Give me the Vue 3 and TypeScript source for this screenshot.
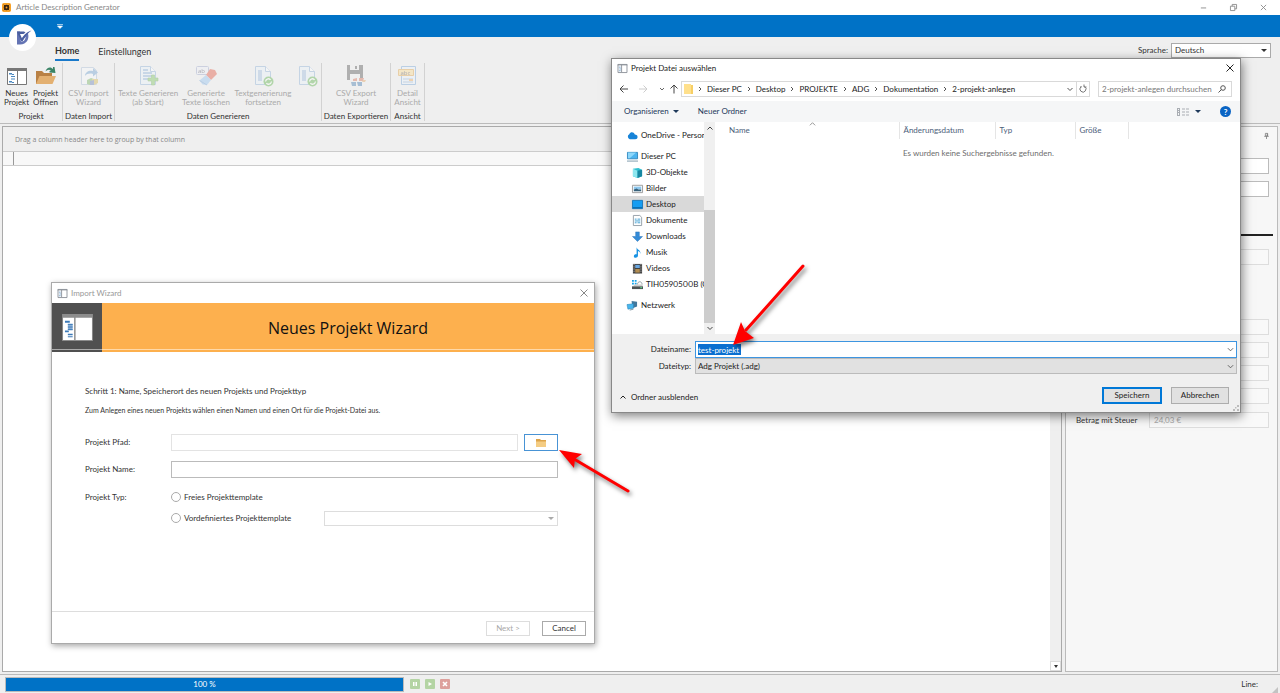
<script setup lang="ts">
import { ref } from 'vue'

interface RibbonItem { icon: string; lines: string[]; width: number; off?: boolean }
interface RibbonGroup { label: string; width: number; items: RibbonItem[] }
interface TreeItem { label: string; icon: string; root?: boolean; gap?: boolean; active?: boolean }

const groups: RibbonGroup[] = [
  {
    label: 'Projekt', width: 63, items: [
      { icon: 'new', lines: ['Neues', 'Projekt'], width: 29 },
      { icon: 'open', lines: ['Projekt', 'Öffnen'], width: 29 },
    ],
  },
  { label: 'Daten Import', width: 52, items: [{ icon: 'import', lines: ['CSV Import', 'Wizard'], width: 50, off: true }] },
  {
    label: 'Daten Generieren', width: 207, items: [
      { icon: 'add', lines: ['Texte Generieren', '(ab Start)'], width: 64, off: true },
      { icon: 'erase', lines: ['Generierte', 'Texte löschen'], width: 52, off: true },
      { icon: 'refresh', lines: ['Textgenerierung', 'fortsetzen'], width: 62, off: true },
      { icon: 'refresh', lines: [], width: 26, off: true },
    ],
  },
  { label: 'Daten Exportieren', width: 69, items: [{ icon: 'export', lines: ['CSV Export', 'Wizard'], width: 60, off: true }] },
  { label: 'Ansicht', width: 34, items: [{ icon: 'detail', lines: ['Detail', 'Ansicht'], width: 33, off: true }] },
]

const tree: TreeItem[] = [
  { label: 'OneDrive - Person', icon: 'cloud', root: true },
  { label: 'Dieser PC', icon: 'pc', root: true, gap: true },
  { label: '3D-Objekte', icon: 'cube' },
  { label: 'Bilder', icon: 'image' },
  { label: 'Desktop', icon: 'desktop', active: true },
  { label: 'Dokumente', icon: 'doc' },
  { label: 'Downloads', icon: 'down' },
  { label: 'Musik', icon: 'music' },
  { label: 'Videos', icon: 'video' },
  { label: 'TIH0590500B (C:)', icon: 'drive' },
  { label: 'Netzwerk', icon: 'net', root: true, gap: true },
]

const crumbs = ['Dieser PC', 'Desktop', 'PROJEKTE', 'ADG', 'Dokumentation', '2-projekt-anlegen']
const fileName = ref('test-projekt')
const language = ref('Deutsch')
const amount = ref('24,03 €')
const projectType = ref('')
</script>

<template>
  <div class="app">
    <header class="titlebar">
      <svg class="appicon" viewBox="0 0 10 10"><rect width="10" height="10" rx="2" fill="#f7a128" /><circle cx="5" cy="5" r="3" fill="#3a2410" /><circle cx="5" cy="5" r="1" fill="#f7a128" /><path d="M2 2l1.500 1.500M8 2L6.500 3.500M2 8l1.500-1.500M8 8L6.500 6.500" stroke="#3a2410" /></svg>
      <span class="apptitle">Article Description Generator</span>
      <button class="winbtn" aria-label="Minimieren"><svg viewBox="0 0 8 8"><path d="M1 4.500h6" /></svg></button>
      <button class="winbtn" aria-label="Wiederherstellen"><svg viewBox="0 0 8 8"><path d="M.5 2.500h5v5h-5zM2.500 2.500v-2h5v5h-2" /></svg></button>
      <button class="winbtn" aria-label="Schließen"><svg viewBox="0 0 8 8"><path d="M1 1l6 6M7 1L1 7" /></svg></button>
    </header>
    <div class="quickbar">
      <div class="logo">
        <svg viewBox="0 0 27 27"><path d="M8 7.500h3l-.5 3 2 4.500c2-4 6-7.500 10-8.500-2 1-3 2-3.500 3 1.500 5-1 11-8 11H8z" fill="#6474b4" /><path d="M11 16l1.500 2c2.500-.5 4-2.500 4.300-5.500L13 17.500z" fill="#fff" /><path d="M8 7.500h7l1.500 1-2 1.500H11l2 4.500C15 11 18.500 8 22.500 6.500c-4 3-7 6.500-9.500 11.500L9 10.500z" fill="#4a5f9f" /></svg>
      </div>
      <svg class="quickcaret" viewBox="0 0 6 5"><path d="M0 .5h6M.5 2L3 4.500 5.500 2z" fill="#fff" stroke="#fff" stroke-width=".6" /></svg>
    </div>

    <section class="ribbon">
      <nav class="tabs">
        <button class="tab on">Home</button>
        <button class="tab">Einstellungen</button>
        <label class="lang">Sprache:
          <span class="combo"><select v-model="language"><option>Deutsch</option></select><i class="tri"></i></span>
        </label>
      </nav>
      <div class="groups">
        <div v-for="g in groups" :key="g.label" class="group" :style="{ width: g.width + 'px' }">
          <div class="items">
            <button v-for="(it, i) in g.items" :key="i" class="item" :disabled="it.off" :style="{ width: it.width + 'px' }" :aria-label="it.lines.length ? undefined : 'Aktualisieren'">
              <svg viewBox="0 0 22 22">
                <template v-if="it.icon === 'new'">
                  <path d="M1.500 3.500h19v16h-19z" fill="#fff" stroke="#777" /><path d="M1 3h20v3H1z" fill="#777" /><path d="M11.500 6v14" stroke="#777" />
                  <path d="M3 8h3v1.500H3zM5 11h4v1H5zM5 13.500h4v1H5zM3 16h3v1.500H3zM6 9h2v1H6zM6 17h2v1H6z" fill="#4a88c0" />
                </template>
                <template v-else-if="it.icon === 'open'">
                  <path d="M1 6h6l2 2h8v11H1z" fill="#b98145" /><path d="M4.500 11H21l-3.500 8H1z" fill="#e3b071" /><path d="M10.500 6.500c1-4 5-5.500 7.500-2.500V2h1.500l1 6-6-.5V6l1.500-.5c-2-1.500-4-.5-5.500 1z" fill="#3b8467" />
                </template>
                <template v-else-if="it.icon === 'import'">
                  <path d="M3.500 2.500h12l3 3v14h-15z" fill="#f8fafc" stroke="#a9bdd4" /><path d="M7 11c0-4 4-6 8-5V3l5 4.500-5 4V9c-3-1-6-.5-8 2z" fill="#6a9fd0" /><path d="M9 15l4-2 3 1v5l-4 1-3-1z" fill="#74b35d" /><path d="M14 14h6v4l-4 2-3-1z" fill="#d5b64f" /><path d="M12 16l4-1v5h-4z" fill="#667fb5" />
                </template>
                <template v-else-if="it.icon === 'add' || it.icon === 'refresh'">
                  <path d="M3.500 1.500h10l5 5v13h-15z" fill="#eaf2fb" stroke="#88acd6" /><path d="M13.500 1.500v5h5" fill="#fff" stroke="#88acd6" />
                  <path v-if="it.icon === 'refresh'" d="M6 5h4v11H6z" fill="#9dbce0" />
                  <path v-else d="M6 5h5M6 8h9M6 11h9M6 14h7" stroke="#72a0d4" stroke-width="1.500" />
                  <path v-if="it.icon === 'add'" d="M14.500 10h3v3h3.500v3h-3.500v4h-3v-4H11v-3h3.500z" fill="#7ac35c" stroke="#58a53c" stroke-width=".6" />
                  <g v-else><circle cx="16.500" cy="16.500" r="5" fill="#55af43" /><path d="M13.500 16.500c.5-3 4-3.500 5-1.500M19.500 16.500c-.5 3-4 3.500-5 1.500" fill="none" stroke="#fff" stroke-width="1.300" /></g>
                </template>
                <template v-else-if="it.icon === 'erase'">
                  <rect x="1.500" y="1.500" width="12" height="8" rx="1" fill="#eef0f8" stroke="#99a4c8" /><text x="3" y="8" class="ic">ab</text>
                  <path d="M15 4l5 1 2 4-6 6-5-5z" fill="#e1523a" /><path d="M11 10l5 5-4 5-4.500-.5-3-4z" fill="#8fc0f0" /><path d="M4.500 15.500l7.500 4.500" stroke="#6d9bd0" />
                </template>
                <template v-else-if="it.icon === 'export'">
                  <path d="M2 0h16v14h-3V9H5v6H2zM5 0v5h9V0z" fill="#505050" fill-rule="evenodd" /><path d="M10 1h2v3h-2z" fill="#505050" />
                  <path d="M8 14l4-1v3H8zM14 13h5l-1 3h-4z" fill="#d5694f" /><path d="M6 17h5v4H7z" fill="#3f78ad" /><path d="M12 17h5v4h-4z" fill="#3973ae" /><path d="M18 15h3l-1 2h-3z" fill="#e3a35a" />
                </template>
                <template v-else>
                  <path d="M4.500 1.500h14v18h-14z" fill="#e8f2fc" stroke="#70a0d4" /><path d="M6 14h10M6 17h10" stroke="#88aad0" /><path d="M12 14h4v2h-4z" fill="#f0a850" /><path d="M1.500 4.500h15v6h-15z" fill="#fbd98c" stroke="#e0a040" /><text x="3.500" y="9.500" class="ic">abc</text>
                </template>
              </svg>
              <span v-for="l in it.lines" :key="l">{{ l }}</span>
            </button>
          </div>
          <div class="glabel">{{ g.label }}</div>
        </div>
      </div>
    </section>

    <main class="content">
      <section class="grid">
        <div class="grouppanel">Drag a column header here to group by that column</div>
        <div class="gridhead"><i></i></div>
        <div class="gridbody"><div class="vscroll"><button aria-label="Nach unten"><i class="tri"></i></button></div></div>
      </section>
      <aside class="side">
        <div class="pinrow"><svg viewBox="0 0 6 8"><path d="M1.500.5h3v3.500h-3zM0 4.500h6M3 4.500V8M4 .5V4" fill="none" stroke="#777" /></svg></div>
        <input class="field solid" aria-label="Feld 1"><input class="field solid" aria-label="Feld 2">
        <hr>
        <input class="field lone" disabled aria-label="Feld 3">
        <input v-for="n in 4" :key="n" class="field" disabled :aria-label="'Feld ' + (n + 3)">
        <label class="amount"><span>Betrag mit Steuer</span><input v-model="amount" class="field" disabled></label>
      </aside>
    </main>

    <footer class="status">
      <div class="progress" role="progressbar" aria-valuenow="100">100 %</div>
      <button class="mini green" aria-label="Pause"><svg viewBox="0 0 10 10"><path d="M3 3h1.500v4H3zM5.500 3H7v4H5.500z" fill="#fff" /></svg></button>
      <button class="mini green" aria-label="Start"><svg viewBox="0 0 10 10"><path d="M3.500 3L7 5 3.500 7z" fill="#fff" /></svg></button>
      <button class="mini red" aria-label="Stopp"><svg viewBox="0 0 10 10"><path d="M3 3l4 4M7 3L3 7" stroke="#fff" stroke-width="1.600" /></svg></button>
      <span class="line">Line:</span>
      <svg class="grip" viewBox="0 0 6 6"><path d="M6 0v6H0z" fill="#c3c3c3" /></svg>
    </footer>

    <section class="wizard" role="dialog" aria-label="Import Wizard">
      <div class="wtitle">
        <svg class="wicon" viewBox="0 0 11 10"><path d="M.5.500h10v9H.5zM4.500 1v8" fill="#fff" stroke="#8a9097" /><path d="M0 1h11" stroke="#8a9097" /><path d="M1.500 3.500h2M2 5.500h2M1.500 7.500h2" stroke="#7aa5cc" /></svg>
        <span>Import Wizard</span>
        <button aria-label="Schließen"><svg viewBox="0 0 8 8"><path d="M.5.500l7 7M7.500.500l-7 7" /></svg></button>
      </div>
      <div class="banner">
        <div class="bicon">
          <svg viewBox="0 0 32 28"><path d="M0 0h32v28H0z" fill="#8c8c8c" /><path d="M1 4h11.500v23H1zM14 4h17v23H14z" fill="#fff" /><path d="M3 7h5v2H3zM3 17h4v2H3zM6 20.500h5V22H6zM6 23h5v1H6z" fill="#3c7ab8" /><path d="M6 10h5v7H6z" fill="#8db2d8" /><path d="M6 11h5M6 13.500h5M6 16h5" stroke="#3c7ab8" /></svg>
        </div>
        <h1>Neues Projekt Wizard</h1>
      </div>
      <form class="wbody" @submit.prevent>
        <p class="step">Schritt 1: Name, Speicherort des neuen Projekts und Projekttyp</p>
        <p class="hint">Zum Anlegen eines neuen Projekts wählen einen Namen und einen Ort für die Projekt-Datei aus.</p>
        <div class="frow"><label for="pfad">Projekt Pfad:</label><input id="pfad" class="light"><button class="browse" type="button" aria-label="Durchsuchen"><svg viewBox="0 0 10 8"><path d="M0 0h4l1 1h5v7H0z" fill="#dda44a" /><path d="M0 2.500h10V8H0z" fill="#f4cc83" /></svg></button></div>
        <div class="frow"><label for="pname">Projekt Name:</label><input id="pname"></div>
        <div class="types">
          <span>Projekt Typ:</span>
          <label class="radio"><input v-model="projectType" type="radio" name="typ" value="frei">Freies Projekttemplate</label>
          <label class="radio second"><input v-model="projectType" type="radio" name="typ" value="vordefiniert">Vordefiniertes Projekttemplate</label>
          <span class="combo tpl"><select disabled aria-label="Projekttemplate"></select><i class="tri"></i></span>
        </div>
      </form>
      <div class="wfoot"><button disabled>Next &gt;</button><button>Cancel</button></div>
    </section>

    <section class="dialog" role="dialog" aria-label="Projekt Datei auswählen">
      <div class="dtitle">
        <svg class="wicon" viewBox="0 0 11 10"><path d="M.5.500h10v9H.5zM4.500 1v8" fill="#fff" stroke="#8a9097" /><path d="M0 1h11" stroke="#8a9097" /><path d="M1.500 3.500h2M2 5.500h2M1.500 7.500h2" stroke="#7aa5cc" /></svg>
        <span>Projekt Datei auswählen</span>
        <button aria-label="Schließen"><svg viewBox="0 0 8 8"><path d="M.5.500l7 7M7.500.500l-7 7" /></svg></button>
      </div>
      <div class="nav">
        <button aria-label="Zurück"><svg viewBox="0 0 10 10"><path d="M9 5H1M4.500 1.500L1 5l3.500 3.500" stroke="#444" /></svg></button>
        <button aria-label="Vorwärts"><svg viewBox="0 0 10 10"><path d="M1 5h8M5.500 1.500L9 5 5.500 8.500" stroke="#ccc" /></svg></button>
        <button class="small" aria-label="Verlauf"><svg viewBox="0 0 10 10"><path d="M3 4l2 2 2-2" stroke="#666" /></svg></button>
        <button class="small" aria-label="Aufwärts"><svg viewBox="0 0 10 10"><path d="M5 9.500V1M1.500 4.500L5 1l3.500 3.500" stroke="#444" /></svg></button>
        <div class="address">
          <svg class="folder" viewBox="0 0 9 10"><path d="M0 0h7v1h2v9H0z" fill="#f7cf65" /><path d="M0 0h7v10H0z" fill="#ffe08c" /></svg>
          <span v-for="c in crumbs" :key="c" class="crumb"><svg viewBox="0 0 4 6"><path d="M1 1l2 2-2 2" /></svg>{{ c }}</span>
          <button class="addrdrop" aria-label="Vorherige Orte"><svg viewBox="0 0 10 10"><path d="M2.500 4L5 6.500 7.500 4" stroke="#555" /></svg></button>
          <button class="reload" aria-label="Aktualisieren"><svg viewBox="0 0 10 10"><path d="M6.500 2.500a3 3 0 1 1-3.500.3M6 .5v2.500h2.500M3 2v1.500" stroke="#777" /></svg></button>
        </div>
        <div class="search">
          <input placeholder="2-projekt-anlegen durchsuchen" aria-label="2-projekt-anlegen durchsuchen">
          <svg viewBox="0 0 8 8"><circle cx="5" cy="3" r="2.300" /><path d="M3.500 4.500L.5 7.500" /></svg>
        </div>
      </div>
      <div class="tools">
        <button class="org">Organisieren <i class="tri"></i></button>
        <button>Neuer Ordner</button>
        <button class="view" aria-label="Ansicht"><svg viewBox="0 0 12 8"><path d="M.5 0v8M2.500 0v8M0 .5h3M0 2.500h3M0 4.500h3M0 7.500h3M5 1h3M9 1h3M5 4h3M9 4h3M5 7h3M9 7h3" stroke="#a9adb3" /></svg><i class="tri"></i></button>
        <button class="help" aria-label="Hilfe">?</button>
      </div>
      <div class="dbody">
        <ul class="tree">
          <li v-for="t in tree" :key="t.label" :class="{ root: t.root, gap: t.gap, active: t.active }">
            <svg viewBox="0 0 12 12">
              <path v-if="t.icon === 'cloud'" d="M3 10a3 3 0 0 1-.5-5.500C4 1.500 7.500 2 8.500 5c2 0 3 1 3 2.500S10.500 10 9 10z" fill="#1683d8" />
              <g v-else-if="t.icon === 'pc'"><path d="M.5 1.500h11v7H.5z" fill="#4cb4ef" stroke="#3187bd" /><path d="M1 1.500h9L3 8H1z" fill="#8cd7fb" /><path d="M0 11h12" stroke="#7795a8" /></g>
              <g v-else-if="t.icon === 'cube'"><path d="M1 2l6-1 4 2v7l-5 2-5-2z" fill="#2dbfd0" /><path d="M1 2l5 2v8l-5-2z" fill="#8ee7ef" /><path d="M6 4l5-1v7l-5 2z" fill="#1787a2" /></g>
              <g v-else-if="t.icon === 'image'"><path d="M.5 2.500h11v8H.5z" fill="#f5f8fa" stroke="#999" /><path d="M2 4h8v3H2z" fill="#8dc8ef" /><path d="M2 9V7l3-1 2 1h3v2z" fill="#36617b" /></g>
              <g v-else-if="t.icon === 'desktop'"><path d="M.5 1.500h11v9H.5z" fill="#159df2" stroke="#1675b8" /><path d="M1 9.500h10" stroke="#075f9c" /></g>
              <g v-else-if="t.icon === 'doc'"><path d="M1.500.500h7l2 2v9h-9z" fill="#fff" stroke="#929ca5" /><path d="M3 4.500h2M6 4.500h3M3 6.500h6M3 8.500h2M6 8.500h3" stroke="#369ad1" /></g>
              <path v-else-if="t.icon === 'down'" d="M4 1h4v5h3.500L6 11.500.5 6H4z" fill="#338bd7" stroke="#2770b4" stroke-width=".5" />
              <path v-else-if="t.icon === 'music'" d="M5 0c0 3 5 3 4 7.500C9 5 7.500 4.500 6.500 4.500V9.500C6.500 12 2 12.500 2 10c0-2 2-2.500 3-2z" fill="#1893e4" />
              <g v-else-if="t.icon === 'video'"><path d="M1 1h10v10.500H1z" fill="#3c3c3c" /><path d="M3.500 2h5v3.500h-5z" fill="#6aa6df" /><path d="M3.500 6.500h5v4h-5z" fill="#b28d52" /><path d="M2.200 1v10.500M9.800 1v10.500" stroke="#ccc" stroke-dasharray="1 1" /></g>
              <g v-else-if="t.icon === 'drive'"><path d="M0 1h2v2H0zM3 1h2v2H3zM0 4h2v2H0zM3 4h2v2H3z" fill="#16a4ea" /><path d="M6 6c0-4 5-4 5 0" fill="none" stroke="#8d999e" /><path d="M1 8l2-2h8l1 2z" fill="#ccc" /><path d="M0 8h12v3H0z" fill="#4c5355" /><path d="M9 9h2v1H9z" fill="#5dea8c" /></g>
              <g v-else><path d="M5 1l6 1v5l-5 2z" fill="#42789c" /><path d="M0 5l7-1v5l-6 1z" fill="#47b6ee" stroke="#2a84b8" stroke-width=".6" /><path d="M3 11l4-1" stroke="#78909c" /></g>
            </svg>
            <span>{{ t.label }}</span>
          </li>
        </ul>
        <div class="tscroll">
          <svg viewBox="0 0 8 8"><path d="M1.500 5.500L4 3l2.500 2.500" /></svg>
          <i></i>
          <svg viewBox="0 0 8 8"><path d="M1.500 3L4 5.500 6.500 3" /></svg>
        </div>
        <div class="files">
          <svg class="sort" viewBox="0 0 8 4"><path d="M1 3.500L4 .5l3 3" /></svg>
          <table>
            <thead><tr><th>Name</th><th>Änderungsdatum</th><th>Typ</th><th>Größe</th><th></th></tr></thead>
            <tbody><tr><td></td><td colspan="4">Es wurden keine Suchergebnisse gefunden.</td></tr></tbody>
          </table>
        </div>
      </div>
      <div class="dfoot">
        <div class="drow"><label for="fname">Dateiname:</label>
          <span class="namebox"><input id="fname" v-model="fileName" size="11"><svg viewBox="0 0 8 8"><path d="M1 2.500L4 5.500 7 2.500" /></svg></span>
        </div>
        <div class="drow"><label for="ftype">Dateityp:</label>
          <span class="typebox"><select id="ftype"><option>Adg Projekt (.adg)</option></select><svg viewBox="0 0 8 8"><path d="M1 2.500L4 5.500 7 2.500" /></svg></span>
        </div>
        <div class="actions">
          <button class="hide"><svg viewBox="0 0 8 8"><path d="M1.500 5.500L4 3l2.500 2.500" /></svg>Ordner ausblenden</button>
          <button class="save">Speichern</button><button class="cancel">Abbrechen</button>
        </div>
        <svg class="grip" viewBox="0 0 6 6"><path d="M4 0h2v2H4zM4 4h2v2H4zM2 2h1.500v1.500H2zM0 4h2v2H0z" fill="#bbb" /></svg>
      </div>
    </section>

    <svg class="arrow one" viewBox="0 0 90 100"><path d="M75 11L18 75" stroke="#f00" stroke-width="3" stroke-linecap="round" /><path d="M5 90L13 67l4 9 9 7z" fill="#f00" /></svg>
    <svg class="arrow two" viewBox="0 0 90 60"><path d="M74 46L20 14" stroke="#f00" stroke-width="3" stroke-linecap="round" /><path d="M5 5l23 4-7 5-1 9z" fill="#f00" /></svg>
  </div>
</template>

<style>
body { margin: 0; background: #efefef; }
</style>

<style scoped>
* { box-sizing: border-box; }
.app { position: relative; display: flex; flex-direction: column; min-height: 100vh; overflow: hidden; background: #efefef; color: #333; font: 8px/9px Lato, "Open Sans", sans-serif; }
button, input, select { margin: 0; padding: 0; border: 0; background: none; font: inherit; color: inherit; border-radius: 0; outline: none; min-width: 0; }
select { appearance: none; }
svg { display: block; flex: none; fill: none; overflow: visible; }
.tri { display: block; width: 0; height: 0; border: 3px solid transparent; border-top-color: #333; border-bottom: 0; }

.titlebar { display: flex; align-items: center; height: 15px; padding: 0 2px; background: #fff; color: #888; }
.appicon { width: 9px; height: 9px; }
.apptitle { flex: 1; margin-left: 5px; }
.winbtn { width: 30px; display: flex; justify-content: center; }
.winbtn svg { width: 7px; height: 7px; stroke: #888; stroke-width: 1; }
.quickbar { position: relative; height: 22px; background: #0072c6; }
.logo { position: absolute; left: 9px; top: 9px; width: 27px; height: 27px; border-radius: 50%; background: #fff; }
.quickcaret { position: absolute; left: 57px; top: 9px; width: 6px; height: 5px; }

.ribbon { height: 87px; border-bottom: 1px solid #bbb; }
.tabs { display: flex; height: 26px; padding: 5px 9px 0 55px; align-items: flex-start; }
.tab { height: 19px; line-height: 17px; margin-right: 19px; font-size: 9px; }
.tab.on { font-weight: 700; border-bottom: 2px solid #1979ca; }
.lang { margin-left: auto; display: flex; align-items: center; gap: 3px; height: 16px; }
.combo { display: flex; align-items: center; width: 100px; height: 15px; padding: 0 3px; background: #fff; border: 1px solid #aaa; }
.combo select { flex: 1; }
.groups { display: flex; height: 58px; }
.group { display: flex; flex-direction: column; border-right: 1px solid #d2d2d2; }
.items { flex: 1; display: flex; justify-content: center; }
.item { display: flex; flex-direction: column; align-items: center; white-space: nowrap; }
.item svg { width: 22px; height: 22px; margin: 2px 0 2px; }
.item:disabled { color: #aaa; }
.item:disabled svg { opacity: .4; }
.item .ic { font: 6px "Open Sans", sans-serif; fill: #445; }
.glabel { text-align: center; white-space: nowrap; line-height: 9px; }

.content { flex: 1; display: flex; gap: 3px; padding: 2px; }
.grid { flex: 1; display: flex; flex-direction: column; background: #fff; border: 1px solid #aaa; }
.grouppanel { height: 25px; padding-left: 12px; font: 7px/25px "Open Sans", sans-serif; background: #efefef; color: #888; border-bottom: 1px solid #ccc; }
.gridhead { height: 14px; padding-left: 10px; background: #f8f8f8; border-bottom: 1px solid #ccc; }
.gridhead i { display: block; width: 1px; height: 13px; background: #999; }
.gridbody { flex: 1; display: flex; justify-content: flex-end; }
.vscroll { display: flex; align-items: flex-end; width: 11px; background: #efefef; }
.vscroll button { display: flex; justify-content: center; align-items: center; width: 11px; height: 10px; background: #fff; border: 1px solid #ddd; }
.vscroll .tri { border-width: 3px 2px 0; }
.side { display: flex; flex-direction: column; align-items: flex-end; gap: 7px; width: 213px; padding: 0 8px 0 10px; background: #f7f7f7; border: 1px solid #bbb; }
.pinrow { height: 24px; padding-top: 6px; }
.pinrow svg { width: 5px; height: 6px; }
.field { width: 120px; height: 16px; padding: 0 4px; background: #f9f9f9; border: 1px solid #ddd; color: #aaa; }
.field.solid { background: #fff; border-color: #bbb; }
.side hr { width: 200px; height: 2px; margin: 30px -4px 6px 0; border: 0; background: #222; }
.field.lone { margin-bottom: 47px; }
.amount { display: flex; align-items: center; justify-content: space-between; width: 100%; margin-top: 1px; }

.status { display: flex; align-items: center; height: 19px; padding: 0 2px 0 5px; border-top: 1px solid #bbb; }
.progress { width: 399px; margin-right: 6px; height: 15px; line-height: 13px; text-align: center; color: #fff; background: #0072c6; border: 1px solid #bbb; }
.mini { width: 10px; height: 10px; margin-right: 5px; border-radius: 1px; }
.green { background: #b4d4a4; }
.red { background: #dda09c; }
.line { margin-left: auto; margin-right: 14px; }
.grip { width: 6px; height: 6px; align-self: flex-end; }

.wizard { position: absolute; left: 51px; top: 282px; width: 544px; height: 362px; display: flex; flex-direction: column; background: #fff; border: 1px solid #aaa; box-shadow: 1px 2px 6px rgba(0, 0, 0, .35); }
.wtitle, .dtitle { display: flex; align-items: center; height: 20px; padding: 0 6px 0 5px; color: #999; }
.wicon { width: 11px; height: 9px; margin-right: 3px; }
.wtitle button, .dtitle button { margin-left: auto; }
.wtitle button svg, .dtitle button svg { width: 8px; height: 8px; stroke: #888; }
.banner { display: flex; align-items: center; height: 49px; background: linear-gradient(#fdb04e 46px, #ffd9a8 46px, #ffd9a8 47px, #fdb04e 47px); }
.bicon { width: 50px; height: 49px; display: flex; justify-content: center; align-items: center; background: linear-gradient(#505050 46px, #aaa 46px, #aaa 47px, #505050 47px); }
.bicon svg { width: 31px; height: 27px; }
.banner h1 { flex: 1; margin: 0; text-align: center; font: 400 16px/22px "Open Sans", sans-serif; color: #111; }
.wbody { flex: 1; padding: 34px 36px 0 33px; }
.step, .hint { margin: 0; line-height: 10px; }
.hint { margin: 9px 0 19px; font-size: 7px; }
.frow { display: flex; align-items: center; height: 17px; margin-bottom: 10px; }
.frow label { width: 86px; }
.frow input { flex: 1; height: 17px; border: 1px solid #bbb; }
.frow input.light { border-color: #e3e3e3; }
.browse { display: flex; align-items: center; justify-content: center; width: 34px; height: 17px; margin-left: 6px; border: 1px solid #4893d5; }
.browse svg { width: 10px; height: 8px; }
.types { display: grid; grid-template-columns: 86px 153px 1fr; row-gap: 3px; align-items: center; }
.radio { display: flex; align-items: center; gap: 3px; height: 18px; }
.second { grid-column: 2; }
.radio input { appearance: none; width: 10px; height: 10px; border: 1px solid #aaa; border-radius: 50%; }
.tpl { grid-column: 3; width: auto; border-color: #ddd; }
.tpl .tri { border-top-color: #aaa; }
.wfoot { display: flex; justify-content: flex-end; gap: 12px; height: 32px; padding: 9px 8px 0; border-top: 1px solid #ddd; }
.wfoot button { width: 44px; height: 15px; border: 1px solid #aaa; }
.wfoot button:disabled { color: #aaa; border-color: #ddd; }

.dialog { position: absolute; left: 611px; top: 58px; width: 630px; height: 355px; display: flex; flex-direction: column; background: #fff; border: 1px solid #888; color: #222; box-shadow: 1px 3px 10px rgba(0, 0, 0, .5); }
.dtitle { height: 18px; color: #222; }
.dtitle button svg { stroke: #222; }
.nav { display: flex; align-items: center; height: 24px; padding: 0 8px 0 7px; }
.nav > button { width: 19px; }
.nav > button.small { width: 12px; }
.nav button svg { width: 10px; height: 10px; }
.address { flex: 1; display: flex; align-items: center; height: 16px; margin-right: 8px; padding-left: 2px; border: 1px solid #d9d9d9; }
.folder { width: 9px; height: 10px; }
.crumb { display: flex; align-items: center; margin-left: 5px; white-space: nowrap; }
.crumb svg { width: 4px; height: 6px; margin-right: 5px; stroke: #555; }
.addrdrop { margin-left: auto; margin-right: 1px; }
.reload { display: flex; align-items: center; width: 13px; height: 14px; padding-left: 1px; border-left: 1px solid #d9d9d9; }
.search { display: flex; align-items: center; width: 134px; height: 16px; padding: 0 5px 0 3px; border: 1px solid #d9d9d9; }
.search input { flex: 1; }
.search input::placeholder { color: #777; opacity: 1; }
.search svg { width: 8px; height: 8px; stroke: #555; }
.tools { display: flex; align-items: center; height: 21px; padding: 0 9px 0 12px; background: #f5f6f7; color: #1e395b; }
.tools .tri { border-top-color: #1e395b; }
.org, .view { display: flex; align-items: center; gap: 4px; margin-right: 19px; }
.view { margin-left: auto; }
.view svg { width: 12px; height: 8px; margin-right: 2px; }
.help { width: 11px; height: 11px; border-radius: 50%; background: #0a64c4; color: #fff; font-weight: 700; line-height: 10px; }
.dbody { flex: 1; display: flex; min-height: 0; }
.tree { width: 92px; margin: 0; padding: 5px 0 0; list-style: none; overflow: hidden; font-variant-numeric: proportional-nums; }
.tree li { display: flex; align-items: center; gap: 3px; height: 16px; padding-left: 20px; white-space: nowrap; }
.tree li.root { padding-left: 15px; }
.tree li.gap { margin-top: 5px; }
.tree li.active { background: #d9d9d9; }
.tree svg { width: 11px; height: 11px; }
.tscroll { display: flex; flex-direction: column; align-items: center; width: 11px; padding: 2px 0; background: #f0f0f0; }
.tscroll svg { width: 8px; height: 8px; stroke: #444; }
.tscroll i { width: 11px; height: 113px; margin: auto 0 1px; background: #cdcdcd; }
.files { flex: 1; position: relative; }
.sort { position: absolute; left: 94px; top: 0; width: 7px; height: 4px; stroke: #888; }
table { width: 100%; border-collapse: collapse; table-layout: fixed; }
th { height: 17px; padding: 0 0 0 4px; text-align: left; font-weight: 400; color: #4c607a; border-right: 1px solid #e5e5e5; }
th:nth-child(1) { width: 184px; padding-left: 14px; }
th:nth-child(2) { width: 96px; }
th:nth-child(3) { width: 80px; }
th:nth-child(4) { width: 53px; }
th:last-child { border: 0; }
td { padding: 10px 0 0 4px; color: #6d6d6d; }
.dfoot { position: relative; height: 78px; padding: 7px 3px 0 0; background: #f0f0f0; }
.drow { display: flex; align-items: center; }
.drow label { width: 83px; padding-right: 4px; text-align: right; }
.namebox, .typebox { flex: 1; display: flex; align-items: center; height: 17px; padding: 0 2px; background: #fff; border: 1px solid #3d95e0; }
.namebox svg, .typebox svg { width: 7px; height: 7px; margin-left: auto; stroke: #555; }
.namebox input { width: 43px; height: 11px; color: #fff; background: #0a6fd0; }
.typebox { height: 16px; background: #e1e1e1; border-color: #bbb; }
.typebox select { flex: 1; }
.actions { display: flex; align-items: center; margin-top: 13px; padding-right: 8px; }
.hide { display: flex; align-items: center; gap: 4px; margin-left: 7px; margin-right: auto; padding-top: 3px; }
.hide svg { width: 8px; height: 8px; stroke: #222; }
.save, .cancel { width: 58px; height: 17px; background: #e1e1e1; border: 1px solid #adadad; }
.save { width: 60px; margin-right: 9px; border: 2px solid #0078d7; }
.dfoot .grip { position: absolute; right: 1px; bottom: 1px; }

.arrow { position: absolute; pointer-events: none; filter: drop-shadow(2px 3px 2px rgba(0, 0, 0, .5)); }
.one { left: 728px; top: 255px; width: 90px; height: 100px; }
.two { left: 554px; top: 445px; width: 90px; height: 60px; }
</style>
